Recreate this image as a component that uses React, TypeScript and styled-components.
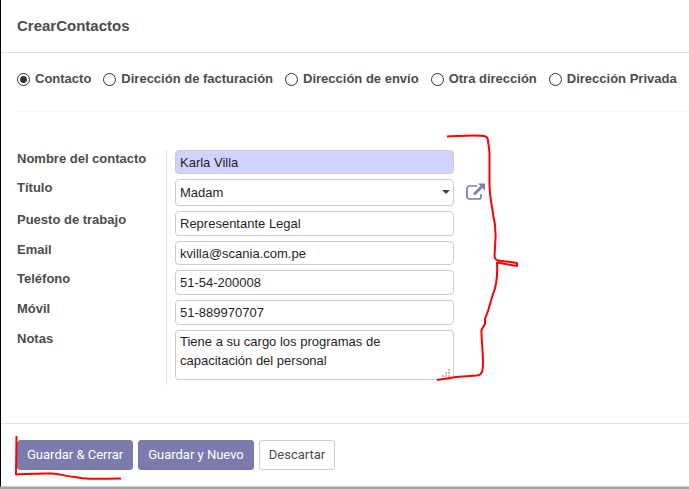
import React, { useState } from "react";
import styled, { createGlobalStyle, css } from "styled-components";

const GlobalStyle = createGlobalStyle`
  *, *::before, *::after { box-sizing: border-box; }
  body {
    margin: 0;
    background: #a5a5a5;
    color: #4c4c4c;
    font-family: "Liberation Sans", Arial, sans-serif;
    font-size: 13px;
    line-height: 20px;
  }
`;

const Dialog = styled.main`
  background: #fff;
  border-left: 1px solid #000;
  border-bottom: 1px solid #cbcbcb;
`;

const Header = styled.header`
  padding: 16px;
  border-bottom: 1px solid #e2e2e2;
`;

const Title = styled.h1`
  margin: 0;
  font-size: 15px;
  line-height: 20px;
  font-weight: bold;
`;

const Body = styled.form`
  padding: 16px 0 38px 16px;
`;

const Kinds = styled.fieldset`
  display: flex;
  gap: 12px;
  margin: 0 0 38px;
  padding: 0 0 22px;
  border: 0;
  border-bottom: 1px solid #f7f7f7;
  white-space: nowrap;
`;

const Kind = styled.label`
  display: flex;
  align-items: center;
  gap: 5px;
  font-weight: bold;
`;

const Radio = styled.input`
  appearance: none;
  flex: none;
  width: 13px;
  height: 13px;
  margin: 0;
  border: 1px solid #333;
  border-radius: 50%;
  background: #fff;
  &:checked {
    background: radial-gradient(circle, #333 0 3px, #fff 4px);
  }
`;

const Sheet = styled.div`
  position: relative;
`;

const Row = styled.div`
  display: grid;
  grid-template-columns: 149px minmax(0, 288px) auto;
`;

const FieldLabel = styled.label`
  font-weight: bold;
  line-height: 18px;
`;

const Cell = styled.div`
  position: relative;
  padding: 0 0 5px 8px;
  border-left: 1px solid #ddd;
`;

const control = css`
  display: block;
  width: 100%;
  height: 25px;
  margin: 0;
  padding: 0 4px;
  border: 1px solid #ccc;
  border-radius: 4px;
  background: #fff;
  color: #1f1f1f;
  font: inherit;
`;

const TextInput = styled.input<{ $short?: boolean; $required?: boolean }>`
  ${control}
  height: ${(p) => (p.$short ? "24px" : "25px")};
  background: ${(p) => (p.$required ? "#d2d2ff" : "#fff")};
`;

const Select = styled.select`
  ${control}
  appearance: none;
  height: 27px;
`;

const Notes = styled.textarea`
  ${control}
  height: 50px;
  padding: 1px 4px;
  line-height: 19px;
  resize: none;
  overflow: hidden;
`;

const Caret = styled.svg`
  position: absolute;
  right: 4px;
  top: 11px;
  width: 8px;
  height: 4px;
  pointer-events: none;
`;

const Grip = styled.svg`
  position: absolute;
  right: 4px;
  bottom: 8px;
  width: 8px;
  height: 8px;
  pointer-events: none;
`;

const OpenButton = styled.button`
  justify-self: start;
  display: flex;
  padding: 4px 12px;
  border: 0;
  background: none;
  cursor: pointer;
`;

const Footer = styled.footer`
  position: relative;
  display: flex;
  gap: 5px;
  padding: 16px;
  border-top: 1px solid #e2e2e2;
`;

const Button = styled.button<{ $primary?: boolean }>`
  height: 30px;
  padding: 0 9px;
  border: 1px solid ${(p) => (p.$primary ? "#7c7bad" : "#ccc")};
  border-radius: 3px;
  background: ${(p) => (p.$primary ? "#7c7bad" : "#fff")};
  color: ${(p) => (p.$primary ? "#fff" : "#4c4c4c")};
  font-family: Roboto, sans-serif;
  font-size: 13px;
  line-height: 20px;
  cursor: pointer;
`;

const Bracket = styled.svg`
  position: absolute;
  left: 413px;
  top: -20px;
  width: 94px;
  height: 255px;
  pointer-events: none;
`;

const Underline = styled.svg`
  position: absolute;
  left: 9px;
  top: 6px;
  width: 120px;
  height: 52px;
  pointer-events: none;
`;

const kinds = ["Contacto", "Dirección de facturación", "Dirección de envío", "Otra dirección", "Dirección Privada"];

function OpenIcon() {
  return (
    <svg width="19" height="18" viewBox="0 0 19 18" fill="none" aria-hidden="true">
      <path d="M11 3H3.5A2.5 2.5 0 0 0 1 5.5v8A2.5 2.5 0 0 0 3.5 16h9a2.5 2.5 0 0 0 2.5-2.5V11" stroke="#7c7bad" strokeWidth="1.7" />
      <path d="M8 11.5 15.5 4" stroke="#7c7bad" strokeWidth="2.8" />
      <path d="M12 .5h7v7z" fill="#7c7bad" />
    </svg>
  );
}

function Field({ id, label, short, required, type = "text", value }: {
  id: string;
  label: string;
  short?: boolean;
  required?: boolean;
  type?: string;
  value: string;
}) {
  return (
    <Row>
      <FieldLabel htmlFor={id}>{label}</FieldLabel>
      <Cell>
        <TextInput id={id} type={type} $short={short} $required={required} required={required} defaultValue={value} />
      </Cell>
    </Row>
  );
}

export default function App() {
  const [kind, setKind] = useState(kinds[0]);
  return (
    <>
      <GlobalStyle />
      <Dialog>
        <Header>
          <Title>CrearContactos</Title>
        </Header>
        <Body id="contact" onSubmit={(e) => e.preventDefault()}>
          <Kinds>
            {kinds.map((k) => (
              <Kind key={k}>
                <Radio type="radio" name="kind" checked={kind === k} onChange={() => setKind(k)} />
                {k}
              </Kind>
            ))}
          </Kinds>
          <Sheet>
            <Field id="name" label="Nombre del contacto" short required value="Karla Villa" />
            <Row>
              <FieldLabel htmlFor="title">Título</FieldLabel>
              <Cell>
                <Select id="title" defaultValue="Madam">
                  <option>Madam</option>
                </Select>
                <Caret viewBox="0 0 8 4" aria-hidden="true">
                  <path d="M0 0h8L4 4z" fill="#444" />
                </Caret>
              </Cell>
              <OpenButton type="button" aria-label="Abrir título">
                <OpenIcon />
              </OpenButton>
            </Row>
            <Field id="job" label="Puesto de trabajo" value="Representante Legal" />
            <Field id="email" label="Email" short type="email" value="kvilla@scania.com.pe" />
            <Field id="phone" label="Teléfono" type="tel" value="51-54-200008" />
            <Field id="mobile" label="Móvil" type="tel" value="51-889970707" />
            <Row>
              <FieldLabel htmlFor="notes">Notas</FieldLabel>
              <Cell>
                <Notes id="notes" defaultValue={"Tiene a su cargo los programas de\ncapacitación del personal"} />
                <Grip viewBox="0 0 8 8" fill="#bbb" aria-hidden="true">
                  <path d="M6 0h2v2H6zM3 3h2v2H3zM6 3h2v2H6zM0 6h2v2H0zM3 6h2v2H3zM6 6h2v2H6z" />
                </Grip>
              </Cell>
            </Row>
            <Bracket viewBox="430 130 94 255" fill="none" stroke="#f00" strokeWidth="2" strokeLinejoin="round" aria-hidden="true">
              <path d="M447 136.5C460 136 475 134.5 484 136Q488 137 488 141L489.5 152V186C490 199 492 205 493 214Q496 226 495.5 238L494.5 256Q495 260 498 260.5L517 263V266L497 262.5Q498 283 493 294L488 311 485 319 485 324 481.5 330C481 342 485 363 482 372Q481 375 477 375.5L456 377 437 380" />
            </Bracket>
          </Sheet>
        </Body>
        <Footer>
          <Button type="submit" form="contact" $primary>Guardar &amp; Cerrar</Button>
          <Button type="button" $primary>Guardar y Nuevo</Button>
          <Button type="button">Descartar</Button>
          <Underline viewBox="10 430 120 52" fill="none" stroke="#f00" strokeWidth="2" strokeLinejoin="round" aria-hidden="true">
            <path d="M16.500 436 16 474.500C28 474 40 473 51 473.500C62 474 63 476 75 477C84 479 90 479 121 478.500" />
          </Underline>
        </Footer>
      </Dialog>
    </>
  );
}
